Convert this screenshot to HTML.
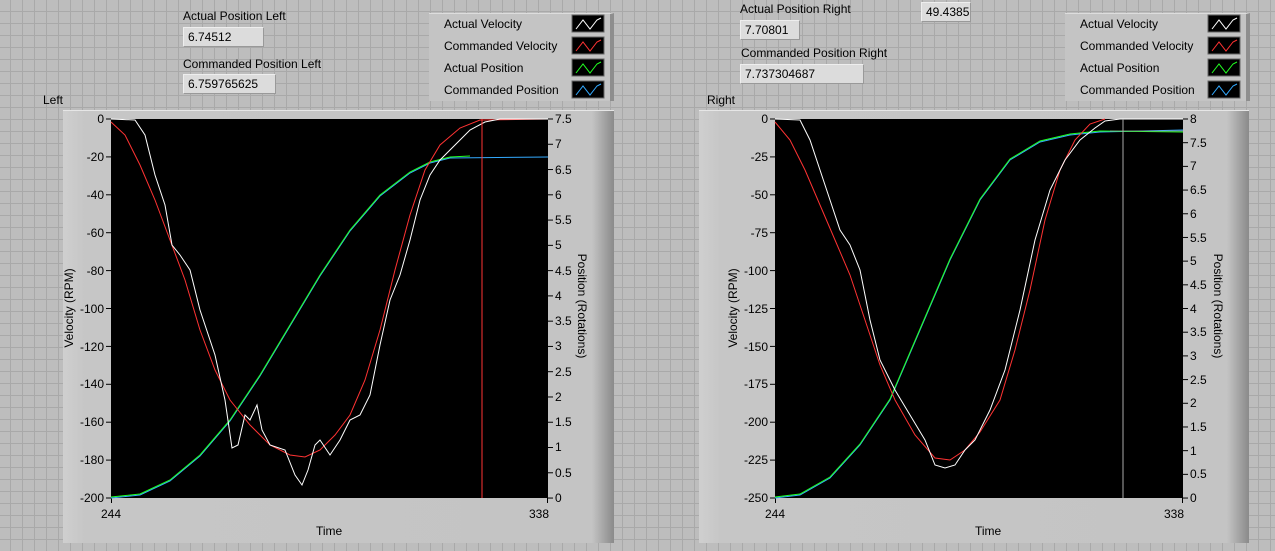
<!DOCTYPE html>
<html><head><style>
body{margin:0;width:1275px;height:551px;overflow:hidden;background-color:#bdbdbd;
background-image:linear-gradient(#a9a9a9 1px,transparent 1px),linear-gradient(90deg,#a9a9a9 1px,transparent 1px);background-size:12px 12px;background-position:-2px -1px;
font-family:"Liberation Sans",sans-serif;font-size:12px;color:#000;position:relative}
.a{position:absolute}
.box{position:absolute;background:#dcdcdc;border-top:1px solid #eee;border-left:1px solid #eee;border-bottom:1px solid #999;border-right:1px solid #999;padding:3px 4px;box-sizing:border-box;height:20px;line-height:13px}
.frame{position:absolute;background:linear-gradient(90deg,#cfcfcf 0,#c6c6c6 4%,#c4c4c4 96%,#8a8a8a 100%);border-top:1px solid #e6e6e6}
.leg{position:absolute;background:#c4c4c4;border-right:4px solid #8e8e8e;border-top:1px solid #ddd;box-sizing:border-box}
svg text{font-family:"Liberation Sans",sans-serif;font-size:12px}
</style></head><body>
<div class="a" style="left:183px;top:9px">Actual Position Left</div>
<div class="box" style="left:183px;top:27px;width:81px">6.74512</div>
<div class="a" style="left:183px;top:57px">Commanded Position Left</div>
<div class="box" style="left:183px;top:74px;width:93px">6.759765625</div>
<div class="a" style="left:740px;top:2px">Actual Position Right</div>
<div class="box" style="left:740px;top:20px;width:60px">7.70801</div>
<div class="box" style="left:921px;top:2px;width:50px">49.4385</div>
<div class="a" style="left:741px;top:46px">Commanded Position Right</div>
<div class="box" style="left:740px;top:64px;width:124px">7.737304687</div>
<div class="a" style="left:43px;top:93px">Left</div>
<div class="a" style="left:707px;top:93px">Right</div>

<div class="leg" style="left:429px;top:13px;width:185px;height:88px"></div>
<div class="leg" style="left:1065px;top:13px;width:185px;height:88px"></div>
<div class="frame" style="left:63px;top:110px;width:551px;height:432px"></div>
<div class="frame" style="left:699px;top:110px;width:550px;height:432px"></div>

<svg class="a" style="left:0;top:0" width="1275" height="551">
<defs>
<pattern id="tl" patternUnits="userSpaceOnUse" x="0" y="118.5" width="10" height="37.9"><rect x="0" y="0" width="10" height="1" fill="#000"/></pattern>
<pattern id="tr1" patternUnits="userSpaceOnUse" x="0" y="118.5" width="10" height="25.27"><rect x="0" y="0" width="10" height="1" fill="#000"/></pattern>
<pattern id="tr2" patternUnits="userSpaceOnUse" x="0" y="118.5" width="10" height="23.69"><rect x="0" y="0" width="10" height="1" fill="#000"/></pattern>
</defs>
<rect x="106" y="118" width="5" height="382" fill="url(#tl)"/>
<rect x="548" y="118" width="5" height="382" fill="url(#tr1)"/>
<rect x="770" y="118" width="5" height="382" fill="url(#tl)"/>
<rect x="1183" y="118" width="5" height="382" fill="url(#tr2)"/>
<line x1="111.5" y1="498" x2="111.5" y2="503" stroke="#000"/><line x1="547.5" y1="498" x2="547.5" y2="503" stroke="#000"/>
<line x1="775.5" y1="498" x2="775.5" y2="503" stroke="#000"/><line x1="1182.5" y1="498" x2="1182.5" y2="503" stroke="#000"/>
<g>
<text x="444" y="28">Actual Velocity</text>
<text x="444" y="50">Commanded Velocity</text>
<text x="444" y="72">Actual Position</text>
<text x="444" y="94">Commanded Position</text>
<text x="1080" y="28">Actual Velocity</text>
<text x="1080" y="50">Commanded Velocity</text>
<text x="1080" y="72">Actual Position</text>
<text x="1080" y="94">Commanded Position</text>
</g>
<g id="sw">
<rect x="572" y="15" width="32" height="17" fill="#000" stroke="#666"/><polyline points="576,29 583,20 590,29 597,20 601,18" fill="none" stroke="#fff"/>
<rect x="572" y="37" width="32" height="17" fill="#000" stroke="#666"/><polyline points="576,51 583,42 590,51 597,42 601,40" fill="none" stroke="#f33"/>
<rect x="572" y="59" width="32" height="17" fill="#000" stroke="#666"/><polyline points="576,73 583,64 590,73 597,64 601,62" fill="none" stroke="#2f2"/>
<rect x="572" y="81" width="32" height="17" fill="#000" stroke="#666"/><polyline points="576,95 583,86 590,95 597,86 601,84" fill="none" stroke="#3af"/>
</g>
<use href="#sw" x="636"/>

<!-- LEFT chart -->
<rect x="111" y="119" width="437" height="379" fill="#000"/>
<g text-anchor="end">
<text x="104" y="123">0</text><text x="104" y="161">-20</text><text x="104" y="199">-40</text><text x="104" y="237">-60</text><text x="104" y="275">-80</text><text x="104" y="313">-100</text><text x="104" y="351">-120</text><text x="104" y="388">-140</text><text x="104" y="426">-160</text><text x="104" y="464">-180</text><text x="104" y="502">-200</text>
</g>
<g>
<text x="555" y="123">7.5</text><text x="555" y="148">7</text><text x="555" y="174">6.5</text><text x="555" y="199">6</text><text x="555" y="224">5.5</text><text x="555" y="249">5</text><text x="555" y="275">4.5</text><text x="555" y="300">4</text><text x="555" y="325">3.5</text><text x="555" y="350">3</text><text x="555" y="376">2.5</text><text x="555" y="401">2</text><text x="555" y="426">1.5</text><text x="555" y="451">1</text><text x="555" y="477">0.5</text><text x="555" y="502">0</text>
</g>
<text x="101" y="518">244</text><text x="529" y="518">338</text><text x="316" y="535">Time</text>
<text transform="translate(73,308) rotate(-90)" text-anchor="middle">Velocity (RPM)</text>
<text transform="translate(578,306) rotate(90)" text-anchor="middle">Position (Rotations)</text>
<polyline fill="none" stroke="#3af" points="111,498 140,495 170,481 200,456 230,421 260,376 290,326 320,276 350,231 380,196 410,173 430,163 450,158 548,157"/>
<polyline fill="none" stroke="#2f2" points="111,497 140,494 170,480 200,455 230,420 260,375 290,325 320,275 350,230 380,195 410,172 430,162 450,157 470,156"/>
<polyline fill="none" stroke="#f33" points="111,122 125,135 140,165 155,200 170,240 185,280 200,330 215,370 230,400 250,425 270,445 290,455 305,457 320,450 335,435 350,415 365,380 380,330 395,270 410,215 425,170 440,145 460,128 480,120 548,119"/>
<polyline fill="none" stroke="#fff" points="111,119 135,120 145,135 155,175 165,205 172,245 180,255 190,270 200,310 215,355 225,400 232,448 238,445 245,415 250,420 257,405 262,430 270,445 285,450 295,475 302,485 308,470 315,445 320,440 330,455 340,440 350,420 360,415 370,395 380,345 390,300 400,275 410,240 420,200 430,175 440,160 455,145 470,130 485,122 500,119 548,119"/>
<line x1="482" y1="119" x2="482" y2="498" stroke="#f33"/>

<!-- RIGHT chart -->
<rect x="775" y="119" width="408" height="379" fill="#000"/>
<g text-anchor="end">
<text x="768" y="123">0</text><text x="768" y="161">-25</text><text x="768" y="199">-50</text><text x="768" y="237">-75</text><text x="768" y="275">-100</text><text x="768" y="313">-125</text><text x="768" y="351">-150</text><text x="768" y="388">-175</text><text x="768" y="426">-200</text><text x="768" y="464">-225</text><text x="768" y="502">-250</text>
</g>
<g>
<text x="1190" y="123">8</text><text x="1190" y="147">7.5</text><text x="1190" y="170">7</text><text x="1190" y="194">6.5</text><text x="1190" y="218">6</text><text x="1190" y="242">5.5</text><text x="1190" y="265">5</text><text x="1190" y="289">4.5</text><text x="1190" y="313">4</text><text x="1190" y="336">3.5</text><text x="1190" y="360">3</text><text x="1190" y="384">2.5</text><text x="1190" y="407">2</text><text x="1190" y="431">1.5</text><text x="1190" y="455">1</text><text x="1190" y="478">0.5</text><text x="1190" y="502">0</text>
</g>
<text x="765" y="518">244</text><text x="1164" y="518">338</text><text x="975" y="535">Time</text>
<text transform="translate(737,308) rotate(-90)" text-anchor="middle">Velocity (RPM)</text>
<text transform="translate(1214,306) rotate(90)" text-anchor="middle">Position (Rotations)</text>
<polyline fill="none" stroke="#3af" points="775,498 800,495 830,478 860,445 890,400 920,330 950,260 980,200 1010,160 1040,142 1070,135 1100,132 1183,130"/>
<polyline fill="none" stroke="#2f2" points="775,497 800,494 830,477 860,444 890,399 920,329 950,259 980,199 1010,159 1040,141 1070,134 1100,131 1183,132"/>
<polyline fill="none" stroke="#f33" points="775,122 790,140 805,170 820,205 835,240 850,275 865,320 880,365 895,400 915,435 935,458 950,460 965,450 980,432 1000,400 1015,350 1030,290 1045,220 1060,170 1075,140 1090,124 1105,119"/>
<polyline fill="none" stroke="#fff" points="775,119 800,120 810,140 820,170 830,200 840,230 850,245 860,270 870,320 880,360 895,390 910,415 925,440 935,465 945,468 955,465 965,450 975,440 990,410 1005,370 1020,310 1035,240 1050,190 1065,160 1080,140 1095,128 1105,121 1120,119 1183,119"/>
<line x1="1123" y1="119" x2="1123" y2="498" stroke="#aaa"/>
<line x1="1110" y1="131" x2="1183" y2="131" stroke="#aaa" stroke-opacity="0.6"/>
</svg>
</body></html>
